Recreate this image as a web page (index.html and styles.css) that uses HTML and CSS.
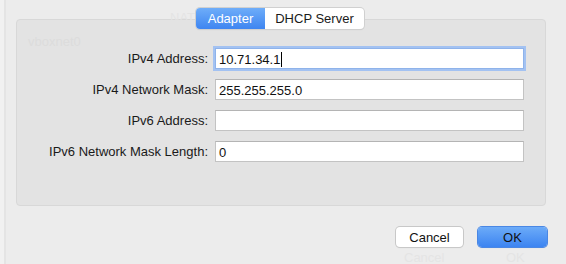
FILE: index.html
```html
<!DOCTYPE html>
<html lang="en">
<head>
  <meta charset="UTF-8">
  <meta name="viewport" content="width=device-width, initial-scale=1.0">
  <title>Adapter</title>
  <link rel="stylesheet" href="styles.css">
</head>
<body>
  <div class="sheet">
    <!-- faded text of the window underneath -->
    <span class="ghost ghost-nat">NAT N</span>
    <span class="ghost ghost-net">vboxnet0</span>
    <span class="ghost ghost-cancel">Cancel</span>
    <span class="ghost ghost-ok">OK</span>

    <div class="tabs">
      <button class="tab tab-active">Adapter</button>
      <button class="tab">DHCP Server</button>
    </div>

    <div class="panel">
      <div class="form">
        <label class="label">IPv4 Address:</label>
        <div class="field field-focus">10.71.34.1<span class="caret"></span></div>
        <label class="label">IPv4 Network Mask:</label>
        <div class="field">255.255.255.0</div>
        <label class="label">IPv6 Address:</label>
        <div class="field"></div>
        <label class="label">IPv6 Network Mask Length:</label>
        <div class="field">0</div>
      </div>
    </div>

    <div class="actions">
      <button class="btn">Cancel</button>
      <button class="btn btn-primary">OK</button>
    </div>
  </div>
</body>
</html>
```

FILE: styles.css
```css
* {
  box-sizing: border-box;
}
body {
  margin: 0;
  background: #ececec;
  font-family: "Liberation Sans", Arial, sans-serif;
  font-size: 13px;
  color: #1a1a1a;
}
.sheet {
  position: relative;
  display: flex;
  flex-direction: column;
  width: 566px;
  height: 264px;
  padding: 8px 20px 0 12px;
  border-left: 4px solid #f1f1f1;
  background: linear-gradient(to right, #e4e4e4 0, #e4e4e4 2px, #ececec 2px);
  overflow: hidden;
}
.ghost {
  position: absolute;
  color: #e4e4e4;
  font-size: 13px;
}
.ghost-nat {
  left: 166px;
  top: 10px;
}
.ghost-net {
  left: 24px;
  top: 34px;
  color: #dcdcdc;
}
.ghost-cancel {
  left: 400px;
  top: 250px;
}
.ghost-ok {
  left: 502px;
  top: 250px;
}
.tabs {
  position: relative;
  z-index: 1;
  display: flex;
  align-self: center;
  margin-left: -2px;
  height: 21px;
  border-radius: 4px;
  background: #fff;
  box-shadow: 0 0 0 1px #d0d0d0, 0 1px 1px rgba(0, 0, 0, .12);
}
.tab {
  height: 21px;
  padding: 0;
  border: none;
  background: none;
  font: inherit;
  color: #1a1a1a;
  cursor: pointer;
}
.tab:first-child {
  width: 69px;
}
.tab:last-child {
  width: 99px;
}
.tab-active {
  color: #fff;
  border-radius: 4px 0 0 4px;
  background: linear-gradient(#6eadf9, #3e85f1);
}
.panel {
  margin-top: -10px;
  height: 187px;
  padding-top: 28px;
  border: 1px solid #d8d8d8;
  border-radius: 4px;
  background: #e3e3e3;
}
.form {
  display: grid;
  grid-template-columns: 191px 309px;
  column-gap: 7px;
  row-gap: 10px;
  align-items: center;
}
.label {
  text-align: right;
}
.field {
  height: 21px;
  padding: 2px 3px 0;
  line-height: 18px;
  background: #fff;
  border: 1px solid #c3c3c3;
  border-top-color: #b4b4b4;
  font-size: 13px;
  color: #111;
}
.field-focus {
  border-color: #8fb3ea;
  box-shadow: 0 0 0 2px #a3c2f2;
}
.caret {
  display: inline-block;
  width: 1px;
  height: 15px;
  margin-left: 1px;
  vertical-align: -3px;
  background: #000;
}
.actions {
  display: flex;
  justify-content: flex-end;
  gap: 15px;
  margin-top: 21px;
  margin-right: -1px;
}
.btn {
  width: 67px;
  height: 20px;
  padding: 0;
  border: none;
  border-radius: 4px;
  background: #fff;
  box-shadow: 0 0 0 1px #c8c8c8, 0 1px 1px rgba(0, 0, 0, .12);
  font: inherit;
  color: #111;
  cursor: pointer;
}
.btn-primary {
  width: 69px;
  background: linear-gradient(#6cabf8, #3c84f1);
  box-shadow: 0 0 0 1px #4a87e4, 0 1px 1px rgba(0, 0, 0, .12);
}
```
